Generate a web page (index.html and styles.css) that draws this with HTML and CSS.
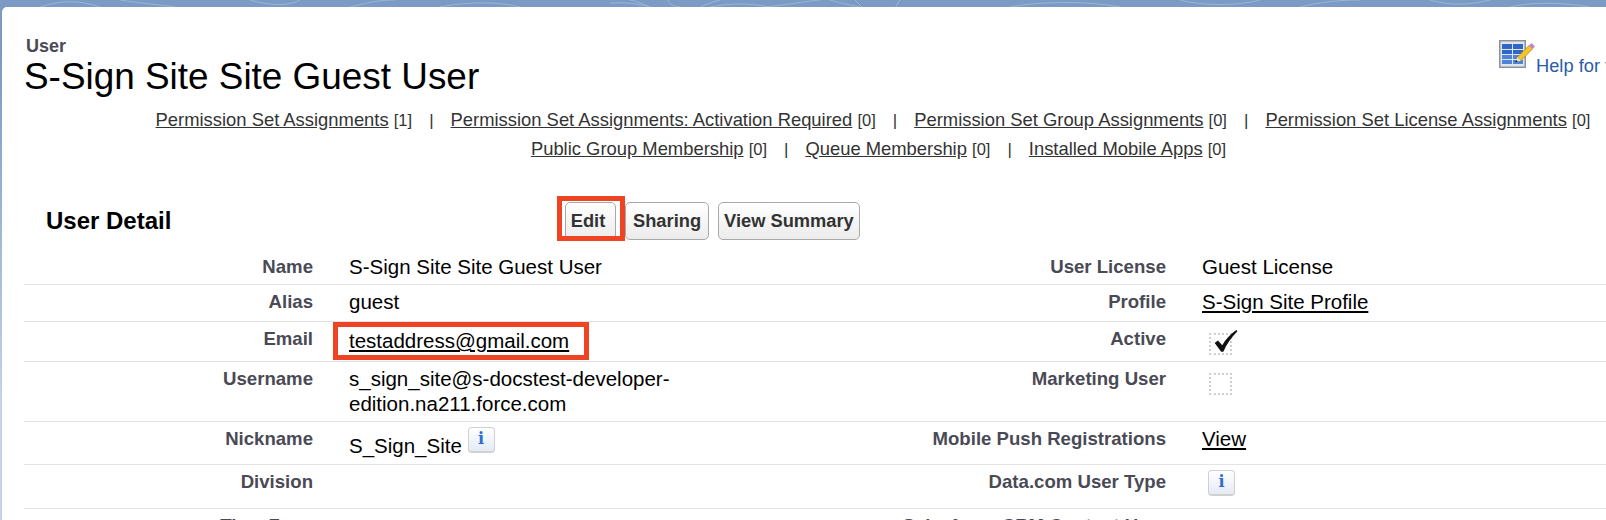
FILE: index.html
```html
<!DOCTYPE html>
<html lang="en">
<head>
<meta charset="utf-8">
<title>User: S-Sign Site Site Guest User</title>
<link rel="stylesheet" href="styles.css">
</head>
<body>
<svg class="pattern" width="1606" height="7" viewBox="0 0 1606 7" fill="none">
  <path d="M40 7 C60 0 80 0 100 7 M120 0 C140 3 160 5 175 7 M250 0 C270 6 290 6 300 0 M350 7 C370 2 380 0 395 0 M440 7 C470 1 500 2 520 7 M610 3 C625 2 640 4 650 7 M630 0 C640 2 645 5 650 7 M668 0 C668 3 672 6 680 7 M700 7 C705 5 712 2 720 0 M710 7 C730 3 750 3 770 7 M763 7 C780 6 800 2 820 0 M830 0 C840 3 850 5 860 7 M855 0 C858 3 860 5 862 7 M900 0 C898 2 897 5 896 7 M1010 7 C1040 1 1090 1 1120 7 M1180 0 C1200 6 1240 6 1260 0 M1300 7 C1320 2 1340 0 1360 0 M1430 0 C1450 6 1470 5 1490 0 M1510 7 C1530 2 1560 2 1590 7" stroke="#9db5d4" stroke-width="1"/>
</svg>
<div class="card">
  <header class="head">
    <div class="titles">
      <div class="kicker">User</div>
      <h1 class="title">S-Sign Site Site Guest User</h1>
    </div>
    <a class="help" href="#">
      <svg class="help-icon" width="36" height="28" viewBox="0 0 36 28">
        <rect x="0.75" y="0.75" width="25.5" height="26.5" fill="#dfe5ee" stroke="#8d9197" stroke-width="1.5"/>
        <g fill="#2f66c8">
          <rect x="3" y="4" width="10" height="5"/><rect x="14" y="4" width="10" height="5"/>
          <rect x="3" y="10" width="10" height="4"/><rect x="14" y="10" width="10" height="4"/>
        </g>
        <g fill="#4f83d8">
          <rect x="3" y="15" width="10" height="4"/><rect x="14" y="15" width="10" height="4"/>
          <rect x="3" y="20" width="10" height="4"/><rect x="14" y="20" width="10" height="4"/>
        </g>
        <path d="M18.5 17 L30 5.5 L33.5 9 L22 20.5 Z" fill="#f3c42f" stroke="#b5851a" stroke-width="0.8"/>
        <path d="M16 22.5 L18.5 17 L22 20.5 Z" fill="#f5e2b0"/>
        <path d="M16 22.5 L17 20 L18.8 21.5 Z" fill="#111"/>
        <path d="M30 5.5 L32.5 3 L36 6.5 L33.5 9 Z" fill="#c486be"/>
      </svg>
      <span>Help for this Page</span>
    </a>
  </header>

  <nav class="links">
    <div class="links-row">
      <span class="link-item"><a href="#">Permission Set Assignments</a> <span class="count">[1]</span></span>
      <span class="link-item"><a href="#">Permission Set Assignments: Activation Required</a> <span class="count">[0]</span></span>
      <span class="link-item"><a href="#">Permission Set Group Assignments</a> <span class="count">[0]</span></span>
      <span class="link-item"><a href="#">Permission Set License Assignments</a> <span class="count">[0]</span></span>
    </div>
    <div class="links-row links-row-second">
      <span class="link-item"><a href="#">Public Group Membership</a> <span class="count">[0]</span></span>
      <span class="link-item"><a href="#">Queue Membership</a> <span class="count">[0]</span></span>
      <span class="link-item"><a href="#">Installed Mobile Apps</a> <span class="count">[0]</span></span>
    </div>
  </nav>

  <section class="detail">
    <div class="detail-head">
      <h2 class="detail-title">User Detail</h2>
      <div class="buttons">
        <button class="btn btn-marked">Edit</button>
        <button class="btn btn-mid">Sharing</button>
        <button class="btn btn-wide">View Summary</button>
      </div>
    </div>

    <div class="row r1">
      <div class="lbl">Name</div><div class="val">S-Sign Site Site Guest User</div>
      <div class="lbl">User License</div><div class="val">Guest License</div>
    </div>
    <div class="row r2">
      <div class="lbl">Alias</div><div class="val">guest</div>
      <div class="lbl">Profile</div><div class="val"><a href="#">S-Sign Site Profile</a></div>
    </div>
    <div class="row r3">
      <div class="lbl">Email</div><div class="val val-email"><a class="marked" href="#">testaddress@gmail.com</a></div>
      <div class="lbl">Active</div>
      <div class="val">
        <span class="check">
          <svg class="tick" width="29" height="26" viewBox="0 0 26 24"><path d="M3 13 L6 10.5 L10 15 C13 10 17 5 23 1 L24 2 C18 8 14 14 11 21 L9 21 Z" fill="#111"/></svg>
        </span>
      </div>
    </div>
    <div class="row r4">
      <div class="lbl">Username</div><div class="val">s_sign_site@s-docstest-developer-edition.na211.force.com</div>
      <div class="lbl">Marketing User</div><div class="val"><span class="check"></span></div>
    </div>
    <div class="row r5">
      <div class="lbl">Nickname</div>
      <div class="val">S_Sign_Site <span class="info">i</span></div>
      <div class="lbl">Mobile Push Registrations</div><div class="val"><a href="#">View</a></div>
    </div>
    <div class="row r6">
      <div class="lbl">Division</div><div class="val"></div>
      <div class="lbl">Data.com User Type</div><div class="val"><span class="info info-solo">i</span></div>
    </div>
    <div class="row r7">
      <div class="lbl">Time Zone</div><div class="val val-low">(GMT-07:00) Pacific Daylight Time (America/Los_Angeles)</div>
      <div class="lbl">Salesforce CRM Content User</div><div class="val"><span class="check"></span></div>
    </div>
  </section>
</div>
</body>
</html>
```
FILE: styles.css
```css
* { box-sizing: border-box; }
html, body { height: 100%; }
body {
  position: relative;
  margin: 0;
  overflow: hidden;
  background: linear-gradient(#7c9bc4 0, #7c9bc4 60px, #c3d2e8 400px);
  font-family: "Liberation Sans", Arial, sans-serif;
  color: #000;
}
a { color: inherit; }
.pattern {
  position: absolute;
  left: 0;
  top: 0;
  display: block;
}
.card {
  position: relative;
  width: 1760px;
  height: 513px;
  top: 7px;
  margin-left: 2px;
  padding: 0 40px 0 22px;
  background: #fff;
  border-radius: 5px 0 0 0;
  overflow: hidden;
}
.head {
  display: flex;
  align-items: flex-start;
  padding-top: 29px;
  height: 99px;
}
.titles { flex: 0 0 1475px; }
.kicker {
  height: 23px;
  padding-left: 2px;
  font-size: 18px;
  line-height: 21px;
  font-weight: bold;
  color: #4a4a56;
}
.title {
  margin: 0;
  font-size: 36.9px;
  line-height: 36px;
  font-weight: normal;
}
.help {
  display: flex;
  align-items: flex-end;
  gap: 1px;
  margin-top: 4px;
  color: #2a5ca8;
  font-size: 18.3px;
  line-height: 21px;
  text-decoration: none;
  white-space: nowrap;
}
.help-icon { display: block; margin-bottom: 8px; }
.links {
  color: #333;
  font-size: 18.4px;
  line-height: 28px;
}
.links-row {
  display: flex;
  justify-content: center;
}
.links-row-second { padding-left: 11px; }
.link-item + .link-item::before {
  content: "|";
  display: inline-block;
  margin: 0 17px;
  font-size: 17px;
}
.count { font-size: 16.5px; }
.detail { margin-top: 38px; }
.detail-head {
  display: flex;
  align-items: flex-start;
  height: 48px;
}
.detail-title {
  flex: 0 0 541px;
  margin: 0;
  padding-left: 22px;
  font-size: 24px;
  line-height: 38px;
  font-weight: bold;
}
.buttons {
  display: flex;
  gap: 9px;
}
.btn {
  height: 38px;
  border: 1px solid #a8a8a8;
  border-radius: 5px;
  background: linear-gradient(#fff, #ececec);
  color: #333;
  font: bold 18.3px "Liberation Sans", Arial, sans-serif;
}
.btn-mid { padding: 0 7px; }
.btn-wide { padding: 0 5px; }
.btn-marked {
  position: relative;
  width: 51px;
  padding: 0 5px 0 0;
}
.btn-marked::after {
  content: "";
  position: absolute;
  left: -9px;
  right: -10px;
  top: -7px;
  bottom: -2px;
  border: 5px solid #ee4423;
}
.row {
  display: grid;
  grid-template-columns: 289px 366px 487px 1fr;
  border-bottom: 1px solid #e3e3e3;
}
.lbl {
  padding-top: 6px;
  text-align: right;
  font-size: 18.6px;
  line-height: 21px;
  font-weight: bold;
  color: #4a4a56;
  white-space: nowrap;
}
.val {
  padding: 5px 0 0 36px;
  font-size: 20.5px;
  line-height: 24.5px;
}
.val-email { padding-top: 7px; }
.val-low { padding-top: 9px; }
.r1 { height: 35px; }
.r2 { height: 37px; }
.r3 { height: 40px; }
.r4 { height: 60px; }
.r5 { height: 43px; }
.r6 { height: 44px; }
.r7 { height: 44px; }
.marked { position: relative; }
.marked::after {
  content: "";
  position: absolute;
  left: -16px;
  right: -20px;
  top: -7px;
  bottom: -8px;
  border: 5px solid #ee4423;
}
.check {
  display: block;
  position: relative;
  width: 23px;
  height: 22px;
  margin: 6px 0 0 7px;
  border: 2px dotted #cfcfcf;
}
.tick { position: absolute; left: 0; top: -6px; }
.info {
  display: inline-block;
  overflow: hidden;
  width: 27px;
  height: 26px;
  border: 1px solid #d0d0d0;
  border-bottom-width: 2px;
  border-radius: 4px;
  background: linear-gradient(#fff, #e4ebf5);
  color: #2d6bd6;
  font: bold 16px/21px "DejaVu Serif", serif;
  text-align: center;
}
.info-solo { margin-left: 6px; }
```
